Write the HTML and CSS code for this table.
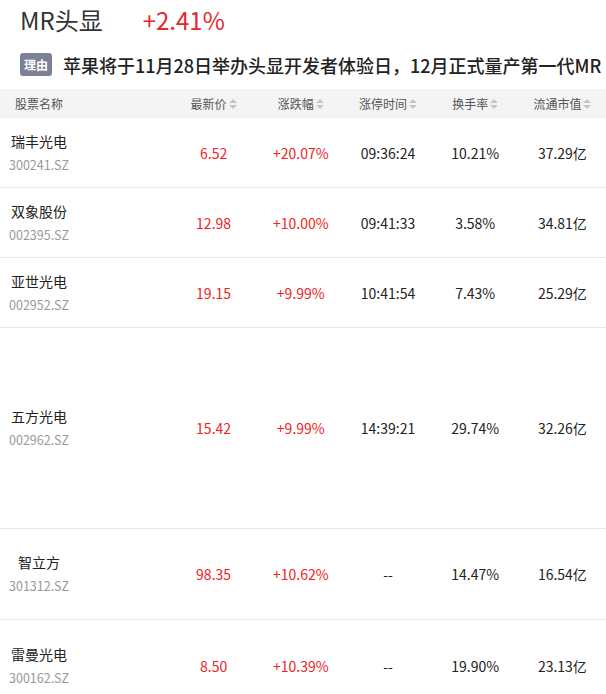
FILE: index.html
```html
<!DOCTYPE html>
<html lang="zh-CN">
<head>
<meta charset="utf-8">
<link rel="stylesheet" href="styles.css">
</head>
<body>
<div class="page">
  <div class="title-row">
    <span class="title">MR头显</span>
    <span class="change">+2.41%</span>
  </div>
  <div class="reason-row">
    <span class="badge">理由</span>
    <span class="reason">苹果将于11月28日举办头显开发者体验日，12月正式量产第一代MR</span>
  </div>
  <div class="table">
    <div class="row head">
      <div class="cell name-cell"><span class="htext">股票名称</span></div>
      <div class="cell"><span class="htext">最新价</span><span class="sort"><i class="up"></i><i class="down"></i></span></div>
      <div class="cell"><span class="htext">涨跌幅</span><span class="sort"><i class="up"></i><i class="down"></i></span></div>
      <div class="cell"><span class="htext">涨停时间</span><span class="sort"><i class="up"></i><i class="down"></i></span></div>
      <div class="cell"><span class="htext">换手率</span><span class="sort"><i class="up"></i><i class="down"></i></span></div>
      <div class="cell"><span class="htext">流通市值</span><span class="sort"><i class="up"></i><i class="down"></i></span></div>
    </div>

    <div class="row r70">
      <div class="cell name-cell"><div class="stock"><div class="sname">瑞丰光电</div><div class="scode">300241.SZ</div></div></div>
      <div class="cell red">6.52</div>
      <div class="cell red">+20.07%</div>
      <div class="cell">09:36:24</div>
      <div class="cell">10.21%</div>
      <div class="cell">37.29亿</div>
    </div>

    <div class="row r70">
      <div class="cell name-cell"><div class="stock"><div class="sname">双象股份</div><div class="scode">002395.SZ</div></div></div>
      <div class="cell red">12.98</div>
      <div class="cell red">+10.00%</div>
      <div class="cell">09:41:33</div>
      <div class="cell">3.58%</div>
      <div class="cell">34.81亿</div>
    </div>

    <div class="row r70">
      <div class="cell name-cell"><div class="stock"><div class="sname">亚世光电</div><div class="scode">002952.SZ</div></div></div>
      <div class="cell red">19.15</div>
      <div class="cell red">+9.99%</div>
      <div class="cell">10:41:54</div>
      <div class="cell">7.43%</div>
      <div class="cell">25.29亿</div>
    </div>

    <div class="row r201">
      <div class="cell name-cell"><div class="stock"><div class="sname">五方光电</div><div class="scode">002962.SZ</div></div></div>
      <div class="cell red">15.42</div>
      <div class="cell red">+9.99%</div>
      <div class="cell">14:39:21</div>
      <div class="cell">29.74%</div>
      <div class="cell">32.26亿</div>
    </div>

    <div class="row r91">
      <div class="cell name-cell"><div class="stock"><div class="sname">智立方</div><div class="scode">301312.SZ</div></div></div>
      <div class="cell red">98.35</div>
      <div class="cell red">+10.62%</div>
      <div class="cell">--</div>
      <div class="cell">14.47%</div>
      <div class="cell">16.54亿</div>
    </div>

    <div class="row r92">
      <div class="cell name-cell"><div class="stock"><div class="sname">雷曼光电</div><div class="scode">300162.SZ</div></div></div>
      <div class="cell red">8.50</div>
      <div class="cell red">+10.39%</div>
      <div class="cell">--</div>
      <div class="cell">19.90%</div>
      <div class="cell">23.13亿</div>
    </div>
  </div>
</div>
</body>
</html>
```

FILE: styles.css
```css
html, body {
  margin: 0;
  padding: 0;
  background: #fff;
}
body {
  font-family: "Noto Sans CJK SC", "Noto Sans", sans-serif;
  color: #333;
  overflow: hidden;
}
.page {
  width: 606px;
}
.title-row {
  display: flex;
  align-items: baseline;
  padding: 2px 0 0 20px;
  height: 38px;
}
.title {
  font-size: 24px;
  line-height: 36px;
  color: #333;
}
.change {
  font-size: 24px;
  line-height: 36px;
  color: #e8262b;
  margin-left: 40px;
}
.reason-row {
  display: flex;
  align-items: center;
  padding: 9px 0 0 20px;
  height: 40px;
  box-sizing: border-box;
  white-space: nowrap;
}
.badge {
  display: inline-flex;
  align-items: center;
  justify-content: center;
  width: 32px;
  height: 23px;
  border-radius: 3px;
  background: #7c8196;
  color: #fff;
  font-size: 12px;
  font-weight: bold;
  flex-shrink: 0;
}
.reason {
  margin-left: 11px;
  font-size: 18px;
  font-weight: 500;
  color: #222;
  line-height: 24px;
}
.table {
  margin-top: 9px;
}
.row {
  display: grid;
  grid-template-columns: 170px repeat(5, 1fr);
  border-bottom: 1px solid #e8e8e8;
  box-sizing: border-box;
}
.row.head {
  height: 29px;
  background: #f4f4f4;
  border-bottom: none;
}
.r70 { height: 70px; }
.r201 { height: 201px; }
.r91 { height: 91px; }
.r92 { height: 92px; }
.cell {
  display: flex;
  align-items: center;
  justify-content: center;
  font-size: 14px;
  color: #222;
}
.cell.red {
  color: #ee2323;
}
.name-cell {
  justify-content: flex-start;
  padding-left: 9px;
}
.head .name-cell {
  padding-left: 15px;
}
.htext {
  font-size: 12px;
  color: #555;
}
.sort {
  display: inline-flex;
  flex-direction: column;
  gap: 2px;
  margin-left: 2px;
}
.sort i {
  display: block;
  width: 0;
  height: 0;
  border-left: 4px solid transparent;
  border-right: 4px solid transparent;
}
.sort .up {
  border-bottom: 4px solid #c6c6c6;
}
.sort .down {
  border-top: 4px solid #c6c6c6;
}
.stock {
  display: inline-block;
  text-align: center;
}
.sname {
  font-size: 14px;
  line-height: 22px;
  color: #222;
}
.scode {
  margin-top: 2px;
  font-size: 12.5px;
  line-height: 22px;
  color: #999;
}
```
